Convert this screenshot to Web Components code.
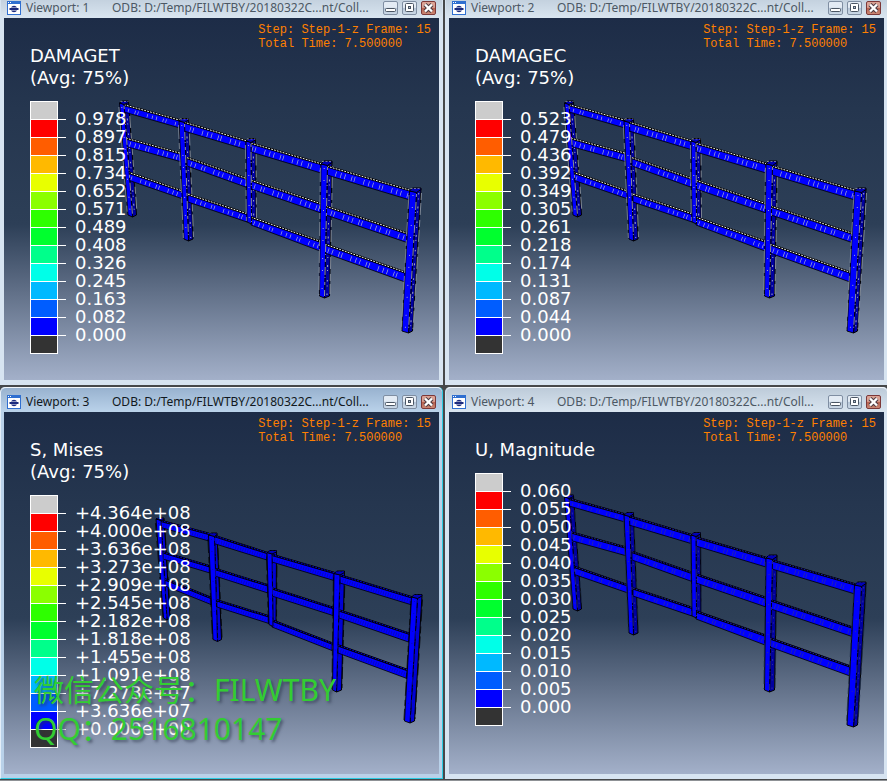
<!DOCTYPE html>
<html lang="zh-CN">
<head>
<meta charset="utf-8">
<title>ODB Viewports</title>
<style>
html{
    height:100%;
    overflow:hidden;
}
body{
    margin:0;
    min-height:100vh;
    overflow:hidden;
    background:#8f9296;
    font-family:"DejaVu Sans",Verdana,sans-serif;
}
</style>
</head>
<body>
<viewport-desk>
    <odb-viewport name="Viewport: 1" odb="ODB: D:/Temp/FILWTBY/20180322C...nt/Coll...">
        <span slot="title">DAMAGET</span>
        <span slot="title">(Avg: 75%)</span>
        <step-info slot="info" step="Step-1-z" frame="15" time="7.500000"></step-info>
        <contour-legend values="0.978 0.897 0.815 0.734 0.652 0.571 0.489 0.408 0.326 0.245 0.163 0.082 0.000"></contour-legend>
        <fence-model slot="model" mesh="light"></fence-model>
    </odb-viewport>
    <odb-viewport name="Viewport: 2" odb="ODB: D:/Temp/FILWTBY/20180322C...nt/Coll...">
        <span slot="title">DAMAGEC</span>
        <span slot="title">(Avg: 75%)</span>
        <step-info slot="info" step="Step-1-z" frame="15" time="7.500000"></step-info>
        <contour-legend values="0.523 0.479 0.436 0.392 0.349 0.305 0.261 0.218 0.174 0.131 0.087 0.044 0.000"></contour-legend>
        <fence-model slot="model" mesh="light"></fence-model>
    </odb-viewport>
    <odb-viewport active name="Viewport: 3" odb="ODB: D:/Temp/FILWTBY/20180322C...nt/Coll...">
        <span slot="title">S, Mises</span>
        <span slot="title">(Avg: 75%)</span>
        <step-info slot="info" step="Step-1-z" frame="15" time="7.500000"></step-info>
        <contour-legend values="+4.364e+08 +4.000e+08 +3.636e+08 +3.273e+08 +2.909e+08 +2.545e+08 +2.182e+08 +1.818e+08 +1.455e+08 +1.091e+08 +7.273e+07 +3.636e+07 +0.000e+00"></contour-legend>
        <fence-model slot="model" shape="far" mesh="dense"></fence-model>
        <water-mark slot="overlay">
            <span>微信公众号：FILWTBY</span>
            <span>QQ：2516810147</span>
        </water-mark>
    </odb-viewport>
    <odb-viewport name="Viewport: 4" odb="ODB: D:/Temp/FILWTBY/20180322C...nt/Coll...">
        <span slot="title">U, Magnitude</span>
        <step-info slot="info" step="Step-1-z" frame="15" time="7.500000"></step-info>
        <contour-legend values="0.060 0.055 0.050 0.045 0.040 0.035 0.030 0.025 0.020 0.015 0.010 0.005 0.000"></contour-legend>
        <fence-model slot="model" mesh="dark"></fence-model>
    </odb-viewport>
</viewport-desk>

<script>
class ViewportDesk extends HTMLElement {

    constructor() {
        super();
        const shadowRoot = this.attachShadow({ mode: 'open' });
        // tiled windows reach a little past the top and right of the screen
        shadowRoot.innerHTML = `
        <style>
        :host{
            display:grid;
            grid-template-columns:1fr 1fr;
            grid-auto-rows:1fr;
            gap:2px;
            box-sizing:border-box;
            min-height:calc(100vh + 6px);
            margin:-7px -1px 0 0;
            border-bottom:1px solid #46484a;
            background:#46484a;
        }
        </style>
        <slot></slot>
        `
    }
}

class OdbViewport extends HTMLElement {

    constructor() {
        super();
        const shadowRoot = this.attachShadow({ mode: 'open' });
        shadowRoot.innerHTML = `
        <style>
        :host{
            --frame:#d7e4f1;
            --barTop:#bdcbd9;
            --barBottom:#d9e5f0;
            --barText:#4c5864;
            display:flex;
            flex-direction:column;
            box-sizing:border-box;
            min-width:0;
            padding:0 3px 4px;
            border:solid #eef4fa;
            border-width:0 1px 1px;
            border-color:var(--frame);
            border-radius:5px 5px 0 0;
            background:var(--frame);
        }
        :host([active]){
            --frame:#b9d1e9;
            --barTop:#98b2cf;
            --barBottom:#bad2ea;
            --barText:#111820;
            border-left-color:#e4eef8;
            border-right-color:#2ccbe2;
            border-bottom-color:#2ccbe2;
        }
        header{
            display:flex;
            align-items:center;
            box-sizing:border-box;
            height:25px;
            margin:0 -3px;
            padding:3px 6px 0;
            border-top:1px solid #f2f7fc;
            border-radius:5px 5px 0 0;
            background:linear-gradient(var(--barTop),var(--barBottom));
            color:var(--barText);
            font:12px/16px "Noto Sans","Open Sans",sans-serif;
            white-space:nowrap;
        }
        .icon{
            flex:none;
            width:14px;
            height:14px;
            margin-right:5px;
        }
        .name{
            flex:none;
            width:86px;
        }
        .odb{
            flex:1;
            min-width:0;
            overflow:hidden;
        }
        .buttons{
            display:flex;
            flex:none;
            gap:4px;
        }
        button{
            width:15px;
            height:14px;
            padding:0;
            border:1px solid #7f8ea2;
            border-radius:2px;
            background:linear-gradient(#e3ebf4 45%,#b6c6d8 50%,#cbd8e6);
        }
        button.close{
            border-color:#7c3838;
            background:linear-gradient(#dba294 45%,#b7604e 50%,#c98673);
        }
        button svg{
            display:block;
            width:13px;
            height:12px;
        }
        main{
            position:relative;
            flex:1;
            overflow:hidden;
            background:linear-gradient(#1d2c47,#25364f 25%,#2d3f57 57%,#5f6e86 75%,#a3b0c9);
        }
        .text{
            position:relative;
            padding:5px 8px 0 26px;
        }
        .head{
            display:flex;
            justify-content:space-between;
            align-items:flex-start;
            margin-bottom:12px;
        }
        h2{
            display:flex;
            flex-direction:column;
            margin:0;
            padding-top:22px;
            color:#fff;
            font-size:18px;
            font-weight:normal;
            line-height:22px;
            white-space:nowrap;
        }
        </style>
        <header>
            <svg class="icon" viewBox="0 0 14 14" aria-hidden="true">
                <rect width="14" height="14" fill="#2f6fd0"/>
                <rect x="1" y="3" width="12" height="10" fill="#fff"/>
                <path d="M1 1.5h1M3 1.5h1" stroke="#fff"/>
                <path d="M4 6.500a3.200 2.500 0 0 1 6 0zM4 9.500a3.200 2.500 0 0 0 6 0z" fill="#1b2a7e"/>
                <rect x="2.500" y="7" width="9" height="2" fill="#1b2a7e"/>
            </svg>
            <span class="name"></span>
            <span class="odb"></span>
            <span class="buttons">
                <button type="button" aria-label="Minimize">
                    <svg viewBox="0 0 13 12"><rect x="1.500" y="6.500" width="10" height="3" rx="1" fill="#fff" stroke="#4a5563"/></svg>
                </button>
                <button type="button" aria-label="Maximize">
                    <svg viewBox="0 0 13 12"><rect x="2.500" y="1.500" width="8" height="8" rx="1" fill="#fff" stroke="#4a5563"/><rect x="5.500" y="4.500" width="2" height="2" fill="#b6c6d8" stroke="#4a5563"/></svg>
                </button>
                <button type="button" class="close" aria-label="Close">
                    <svg viewBox="0 0 13 12"><path d="M3 2.500l7 7M10 2.500l-7 7" stroke="#4b3b42" stroke-width="4.400"/><path d="M3 2.500l7 7M10 2.500l-7 7" stroke="#fff" stroke-width="2.400"/></svg>
                </button>
            </span>
        </header>
        <main>
            <slot name="model"></slot>
            <div class="text">
                <div class="head">
                    <h2><slot name="title"></slot></h2>
                    <slot name="info"></slot>
                </div>
                <slot></slot>
            </div>
            <slot name="overlay"></slot>
        </main>
        `
    }

    connectedCallback() {
        this.shadowRoot.querySelector('.name').textContent = this.getAttribute('name');
        this.shadowRoot.querySelector('.odb').textContent = this.getAttribute('odb');
    }
}

class StepInfo extends HTMLElement {

    constructor() {
        super();
        const shadowRoot = this.attachShadow({ mode: 'open' });
        shadowRoot.innerHTML = `
        <style>
        :host{
            display:block;
            color:#ff8000;
            font:12px/14px "Liberation Mono","Courier New",monospace;
            white-space:nowrap;
        }
        </style>
        <div id="step"></div>
        <div id="time"></div>
        `
    }

    connectedCallback() {
        this.shadowRoot.getElementById('step').textContent = `Step: ${this.getAttribute('step')} Frame: ${this.getAttribute('frame')}`;
        this.shadowRoot.getElementById('time').textContent = `Total Time: ${this.getAttribute('time')}`;
    }
}

const SPECTRUM = ['#ccc','#f00','#ff5d00','#ffb900','#e8ff00','#8bff00','#2eff00','#00ff2e','#00ff8b','#00ffe8','#00b9ff','#005dff','#00f','#333'];

class ContourLegend extends HTMLElement {

    constructor() {
        super();
        const shadowRoot = this.attachShadow({ mode: 'open' });
        shadowRoot.innerHTML = `
        <style>
        :host{
            display:flex;
            color:#fff;
            font-size:18px;
            line-height:18px;
        }
        #bar{
            box-sizing:border-box;
            width:28px;
            border:solid #fff;
            border-width:0 1px 1px;
        }
        #bar i{
            display:block;
            height:17px;
            border-top:1px solid #fff;
        }
        ul{
            margin:9px 0 0;
            padding:0;
            list-style:none;
        }
        li{
            display:flex;
            gap:9px;
            height:18px;
        }
        li::before{
            content:'';
            width:8px;
            height:1px;
            margin-top:9px;
            background:#fff;
        }
        </style>
        <div id="bar"></div>
        <ul></ul>
        `
    }

    connectedCallback() {
        this.shadowRoot.getElementById('bar').innerHTML = SPECTRUM.map(color => `<i style="background:${color}"></i>`).join('');
        this.shadowRoot.querySelector('ul').innerHTML = this.getAttribute('values').split(' ').map(value => `<li>${value}</li>`).join('');
    }
}

// posts: top x of left edge, corner, right edge, top y, cap y, then bottom x of the same three, bottom y
// rails: left x, upper y, lower y, right x, upper y, lower y
const SHAPES = {
    near: {
        posts: [
            [119.5,124,128.5,103,101,128,132.5,136.5,217],
            [179,184.5,188.5,121,118.5,184,188.5,193,241],
            [246,251,255.5,141,138.5,247,251.5,256,224],
            [321,327.5,332,164,161,319.5,324.5,329.5,298],
            [409.5,416.5,421,191,188,402,408.5,412.5,333]
        ],
        rails: [
            [124,104.5,112,180,120,128],[184,122,131,246,140.5,149.5],[251,143,152,321,163.5,173],[327,166,175,410,190,200],
            [126,138,146.5,182,153.5,162],[187,157.5,166,247,178.5,187.5],[251,180,189,321,203.5,213],[326,206,215,407,233,242.5],
            [128,172,180,183,191,199],[188,194,202,247,213.5,222],[251,217,225,320,241,251],[325,244,253,405,272,282]
        ]
    },
    far: {
        posts: [
            [156,161,164,125,124,163.5,167,170,226],
            [208.5,214.5,217,141,139,213,217.5,221.5,247.5],
            [267,272,276.5,158.5,156.5,269,273,276,232.5],
            [334,340,344.5,179.5,177,332.5,336.5,341.5,298],
            [411.5,417.5,422,203,200.5,404.5,410,414.5,329]
        ],
        rails: [
            [161,126.5,133.5,209,139.5,147],[214,141.5,149.5,267,158.5,166],[272,160.5,168,334,178.5,186.5],[340,181,189,412,203,211],
            [163,158,165,210,172,179],[215,174.5,182,268,191,199],[272,194,202,333,213.5,221.5],[339,216,224,410,239.5,248.5],
            [165,185,192,211,203.5,210.5],[217,206,213,269,222,229.5],[272,226,233,332,249,256.5],[338,251,259,407,275.5,284.5]
        ]
    }
};

// edge: broken line over the rail tops, tick: element lines on faces, side: shaded post face
const MESHES = {
    light: { edge: '#f0f0ea', tick: '#a9adc8', outline: '#98a0ac', side: '#0000a0', face: '#00f', ticks: '.7 3.6 .7 6.2 .7 2.3 .7 9 .7 4.5' },
    dark: { edge: '#1a1aa8', tick: '#2c2ca0', outline: '#1c2c48', side: '#0000a0', face: '#00f', ticks: '.7 2.6 .7 5.2 .7 1.8 .7 7' },
    dense: { edge: '#0000d0', tick: '#0a0ab0', outline: '#000', side: '#0000d8', face: '#00f', ticks: '.7 1.8' }
};

class FenceModel extends HTMLElement {

    constructor() {
        super();
        const shadowRoot = this.attachShadow({ mode: 'open' });
        shadowRoot.innerHTML = `
        <style>
        :host{
            position:absolute;
            inset:0;
        }
        svg{
            display:block;
            width:100%;
            height:100%;
        }
        </style>
        <svg viewBox="4 18 435 362" preserveAspectRatio="xMinYMin meet" role="img" aria-label="Fence"></svg>
        `
    }

    connectedCallback() {
        const shape = SHAPES[this.getAttribute('shape') || 'near'];
        const mesh = MESHES[this.getAttribute('mesh')];
        const sides = shape.posts.map(post => this.side(post, mesh)).join('');
        const rails = shape.rails.map((rail, i) => this.rail(rail, i, mesh)).join('');
        const fronts = shape.posts.map(post => this.front(post, mesh)).join('');
        this.shadowRoot.querySelector('svg').innerHTML = sides + rails + fronts;
    }

    side([tl, tm, tr, top, cap, bl, bm, br, bottom], mesh) {
        const mid = (tm + tr) / 2;
        const low = (bm + br) / 2;
        return `
        <path d="M${tm} ${top}L${tr} ${cap + 1}L${br} ${bottom - 2}L${bm} ${bottom}z" fill="${mesh.side}" stroke="#000"/>
        <path d="M${mid} ${top + 2}L${low} ${bottom - 3}" stroke="${mesh.tick}" stroke-width="1" stroke-dasharray="1.5 4 1 7 2 3 1 9"/>
        <path d="M${tr + .5} ${cap + 5}L${br + .5} ${bottom - 4}" stroke="${mesh.outline}" stroke-width=".8" stroke-dasharray="7 3 12 5"/>
        `
    }

    rail([x1, a1, b1, x2, a2, b2], i, mesh) {
        const m1 = (a1 + b1) / 2 + 1;
        const m2 = (a2 + b2) / 2 + 1;
        return `
        <path d="M${x1} ${a1}L${x2} ${a2}L${x2} ${b2}L${x1} ${b1}z" fill="${mesh.face}" stroke="#000" stroke-width=".8"/>
        <path d="M${x1} ${m1}L${x2} ${m2}" stroke="${mesh.tick}" stroke-width="${b1 - a1 - 4}" stroke-dasharray="${mesh.ticks}" stroke-dashoffset="${i * 5}"/>
        <path d="M${x1} ${a1 + .4}L${x2} ${a2 + .4}" stroke="#000" stroke-width="2.4"/>
        <path d="M${x1} ${a1 + .2}L${x2} ${a2 + .2}" stroke="${mesh.edge}" stroke-width="1" stroke-dasharray="1.8 1.2"/>
        `
    }

    front([tl, tm, tr, top, cap, bl, bm, br, bottom], mesh) {
        return `
        <path d="M${tl} ${top}L${tm} ${top + 1}L${bm} ${bottom}L${bl} ${bottom - 2}z" fill="${mesh.face}" stroke="#000" stroke-width=".9"/>
        <path d="M${tl - .6} ${top + 4}L${bl - .6} ${bottom - 3}" stroke="${mesh.outline}" stroke-width=".7" stroke-dasharray="14 4 6 3"/>
        <path d="M${(tl + tm) / 2} ${top + 4}L${(bl + bm) / 2} ${bottom - 3}" stroke="${mesh.tick}" stroke-width="1" stroke-dasharray="1 11 1 17"/>
        <path d="M${tm} ${top + 3}L${bm} ${bottom - 2}" stroke="${mesh.tick}" stroke-width=".8" stroke-dasharray="3 5 8 2 1 4"/>
        <path d="M${tl} ${top}L${tl + 3} ${cap}L${tr} ${cap}L${tr} ${cap + 1.5}L${tm} ${top + 1.5}z" fill="#0000b8" stroke="#000"/>
        <path d="M${tl + 1} ${cap + .5}L${tr} ${cap + .5}" stroke="${mesh.edge}" stroke-width=".8" stroke-dasharray="2 1.5" stroke-opacity=".6"/>
        `
    }
}

class WaterMark extends HTMLElement {

    constructor() {
        super();
        const shadowRoot = this.attachShadow({ mode: 'open' });
        shadowRoot.innerHTML = `
        <style>
        :host{
            position:absolute;
            left:30px;
            bottom:26px;
            display:flex;
            flex-direction:column;
            color:#32cd32;
            font:30px/39px "Noto Sans","Noto Sans CJK TC",sans-serif;
            text-shadow:2px 2px 3px rgba(40,50,70,.6);
            white-space:nowrap;
        }
        </style>
        <slot></slot>
        `
    }
}

customElements.define('viewport-desk', ViewportDesk);
customElements.define('odb-viewport', OdbViewport);
customElements.define('step-info', StepInfo);
customElements.define('contour-legend', ContourLegend);
customElements.define('fence-model', FenceModel);
customElements.define('water-mark', WaterMark);
</script>
</body>
</html>
